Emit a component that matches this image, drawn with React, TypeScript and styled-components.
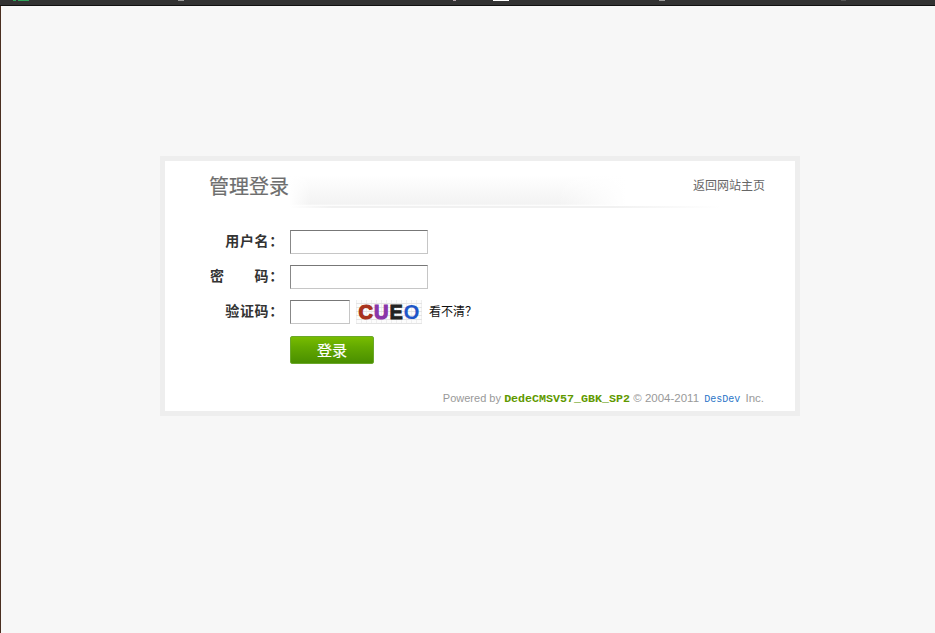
import styled, { createGlobalStyle } from 'styled-components';

const GlobalStyle = createGlobalStyle`
	html, body {
		margin: 0;
		padding: 0;
		height: 100%;
		background: #f7f7f7;
	}
	body {
		font-family: 'Noto Sans CJK SC', 'Liberation Sans', sans-serif;
		font-size: 12px;
		color: #333;
	}
`;

const Page = styled.div`
	height: 633px;
	overflow: hidden;
	background: #f7f7f7;
	display: flex;
	flex-direction: column;
`;

const TopBar = styled.div`
	flex: none;
	height: 5px;
	background: #333;
	border-bottom: 1px solid #111;
	display: flex;
	align-items: flex-start;
`;

const Mark = styled.span<{ $left: number; $width: number; $color: string }>`
	display: block;
	height: 1px;
	margin-left: ${(props) => props.$left}px;
	width: ${(props) => props.$width}px;
	background: ${(props) => props.$color};
`;

const Content = styled.div`
	flex: 1;
	border-left: 1px solid #4a2e20;
	padding: 150px 0 0 159px;
`;

const Card = styled.div`
	box-sizing: border-box;
	width: 640px;
	height: 260px;
	background: #fff;
	border: 5px solid #eee;
	display: flex;
	flex-direction: column;
`;

const Header = styled.div`
	height: 47px;
	margin: 0 30px 0 44px;
	display: flex;
	justify-content: space-between;
	align-items: flex-start;
`;

const Title = styled.h1`
	flex: none;
	margin: 11px 0 0;
	font-size: 20px;
	line-height: 28px;
	font-weight: 400;
	color: #6e6e6e;
	-webkit-text-stroke: 0.2px #6e6e6e;
`;

const Swoosh = styled.div`
	flex: 1;
	height: 33px;
	margin: 14px 0 0 0;
	background:
		linear-gradient(90deg, rgba(255, 255, 255, 0) 0, #f1f1f1 10%, #f1f1f1 75%, rgba(255, 255, 255, 0) 100%) bottom / 100% 2px no-repeat,
		linear-gradient(90deg, #fff 0, rgba(255, 255, 255, 0) 5%, rgba(255, 255, 255, 0) 62%, #fff 78%) 0 0 / 100% 100% no-repeat,
		linear-gradient(180deg, #fff 0, #f3f3f3 88%, #fff 94%) 0 0 / 100% 100% no-repeat;
`;

const HomeLink = styled.a`
	flex: none;
	margin: 15px 0 0 -28px;
	font-size: 12px;
	line-height: 18px;
	color: #666;
	text-decoration: none;
`;

const Form = styled.form`
	margin: 22px 0 0;
	display: flex;
	flex-direction: column;
	gap: 11px;
`;

const Row = styled.div`
	display: grid;
	grid-template-columns: 115px auto 1fr;
	column-gap: 10px;
	align-items: center;
	height: 24px;
`;

const Label = styled.label`
	font-size: 14px;
	font-weight: 700;
	letter-spacing: 0.7px;
	color: #333;
	text-align: right;
	padding-bottom: 4px;
	margin-right: -4px;
	white-space: nowrap;
`;

const SpacedLabel = styled(Label)`
	display: flex;
	justify-content: space-between;
	margin-left: 45px;
`;

const Input = styled.input<{ $short?: boolean }>`
	box-sizing: border-box;
	display: block;
	width: ${(props) => (props.$short ? 60 : 138)}px;
	height: 24px;
	padding: 0 4px;
	background: #fff;
	border: 1px solid #c6c6c6;
	border-top-color: #777;
	border-left-color: #888;
	outline: none;
`;

const CaptchaGroup = styled.div`
	display: flex;
	align-items: center;
`;

const Captcha = styled.div`
	width: 66px;
	height: 24px;
	margin-left: 6px;
	display: flex;
	align-items: center;
	justify-content: center;
	gap: 1px;
	background-color: #fcfcfc;
	background-image:
		repeating-linear-gradient(0deg, #e4e4e4 0 1px, transparent 1px 4px),
		repeating-linear-gradient(90deg, #efefef 0 1px, transparent 1px 5px);
	font-family: 'Liberation Sans', sans-serif;
	font-size: 20px;
	font-weight: 700;
	line-height: 24px;
`;

const CaptchaChar = styled.span<{ $color: string; $stroke: number }>`
	color: ${(props) => props.$color};
	-webkit-text-stroke: ${(props) => props.$stroke}px ${(props) => props.$color};
`;

const Unclear = styled.a`
	margin-left: 7px;
	padding-bottom: 4px;
	font-size: 12px;
	color: #111;
	text-decoration: none;
`;

const ButtonRow = styled.div`
	margin: 1px 0 0 125px;
`;

const Submit = styled.button`
	display: block;
	box-sizing: border-box;
	width: 84px;
	height: 28px;
	padding: 0 0 2px;
	color: #fff;
	font-family: inherit;
	font-size: 15px;
	-webkit-text-stroke: 0.2px #fff;
	background: linear-gradient(180deg, #78bc00 0, #62a800 40%, #4a8f00 100%);
	border: 1px solid #6aa82a;
	border-radius: 2px;
`;

const Footer = styled.div`
	margin: auto 31px 3px 0;
	text-align: right;
	font-family: 'Liberation Sans', sans-serif;
	font-size: 11.5px;
	line-height: 16px;
	color: #999;
`;

const Powered = styled.span`
	font-size: 11px;
`;

const Version = styled.b`
	font-family: 'Liberation Mono', monospace;
	font-size: 11.67px;
	color: #5f9900;
`;

const Company = styled.span`
	font-family: 'Liberation Mono', monospace;
	font-size: 10px;
	color: #2a75c8;
	margin: 0 2px;
`;

const captchaChars = [
	{ c: 'C', color: '#a8321c', stroke: 1.2 },
	{ c: 'U', color: '#8a35a8', stroke: 1.2 },
	{ c: 'E', color: '#222', stroke: 0.8 },
	{ c: 'O', color: '#1d55c8', stroke: 0.2 },
];

export default function App() {
	return (
		<Page>
			<GlobalStyle />
			<TopBar>
				<Mark $left={13} $width={3} $color='#2fa35a' />
				<Mark $left={2} $width={11} $color='#2fa35a' />
				<Mark $left={149} $width={6} $color='#999' />
				<Mark $left={269} $width={3} $color='#b0a0a8' />
				<Mark $left={37} $width={16} $color='#fff' />
				<Mark $left={150} $width={6} $color='#999' />
				<Mark $left={176} $width={5} $color='#555' />
			</TopBar>
			<Content>
				<Card>
					<Header>
						<Title>管理登录</Title>
						<Swoosh />
						<HomeLink href='#'>返回网站主页</HomeLink>
					</Header>
					<Form>
						<Row>
							<Label>用户名：</Label>
							<Input type='text' />
						</Row>
						<Row>
							<SpacedLabel>
								<span>密</span>
								<span>码：</span>
							</SpacedLabel>
							<Input type='password' />
						</Row>
						<Row>
							<Label>验证码：</Label>
							<CaptchaGroup>
								<Input type='text' $short />
								<Captcha>
									{captchaChars.map((d) => (
										<CaptchaChar key={d.c} $color={d.color} $stroke={d.stroke}>
											{d.c}
										</CaptchaChar>
									))}
								</Captcha>
								<Unclear href='#'>看不清？</Unclear>
							</CaptchaGroup>
						</Row>
						<ButtonRow>
							<Submit type='button'>登录</Submit>
						</ButtonRow>
					</Form>
					<Footer>
						<Powered>Powered by</Powered> <Version>DedeCMSV57_GBK_SP2</Version> © 2004-2011 <Company>DesDev</Company> Inc.
					</Footer>
				</Card>
			</Content>
		</Page>
	);
}
